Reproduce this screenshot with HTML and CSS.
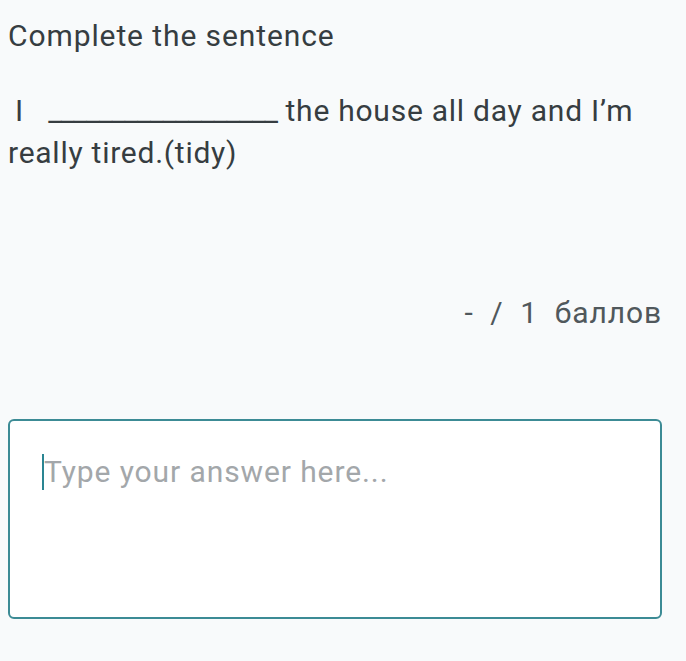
FILE: index.html
```html
<!DOCTYPE html>
<html lang="ru">
<head>
  <meta charset="UTF-8" />
  <meta name="viewport" content="width=device-width, initial-scale=1.0"/>
  <title>Complete the sentence</title>
  <link rel="stylesheet" href="styles.css">
</head>
<body>
  <div class="question">
    <h1 class="title">Complete the sentence</h1>
    <p class="sentence"><span class="pronoun">I</span> <span class="blank">__________________</span> the house all day and I’m really tired.(tidy)</p>
    <div class="score">- &nbsp;/ &nbsp;1 &nbsp;баллов</div>
    <div class="answer">
      <span class="caret"></span>
      <span class="placeholder">Type your answer here...</span>
    </div>
  </div>
</body>
</html>
```

FILE: styles.css
```css
body {
  font-family: Roboto, 'Noto Sans', sans-serif;
  background: #f8fafb;
  color: #363d41;
  margin: 0;
  padding: 0 8px;
  letter-spacing: 0.9px;
}

.title {
  font-size: 30px;
  font-weight: normal;
  margin: 0;
  padding-top: 16px;
  line-height: 40px;
}

.sentence {
  font-size: 30px;
  line-height: 42px;
  margin: 34px 0 0;
  letter-spacing: 0.75px;
}

.pronoun {
  margin-left: 7px;
  margin-right: 16px;
}

.blank {
  letter-spacing: -0.8px;
}

.score {
  text-align: right;
  font-size: 30px;
  color: #50585c;
  margin: 119px 16px 0 0;
  line-height: 40px;
}

.answer {
  display: flex;
  align-items: flex-start;
  height: 200px;
  margin-top: 86px;
  margin-right: 16px;
  padding: 33px 0 0 32px;
  box-sizing: border-box;
  background: #fff;
  border: 2px solid #3c8b95;
  border-radius: 6px;
}

.caret {
  width: 2px;
  height: 36px;
  background: #2a8592;
}

.placeholder {
  font-size: 30px;
  line-height: 36px;
  color: #a3a7aa;
}
```
